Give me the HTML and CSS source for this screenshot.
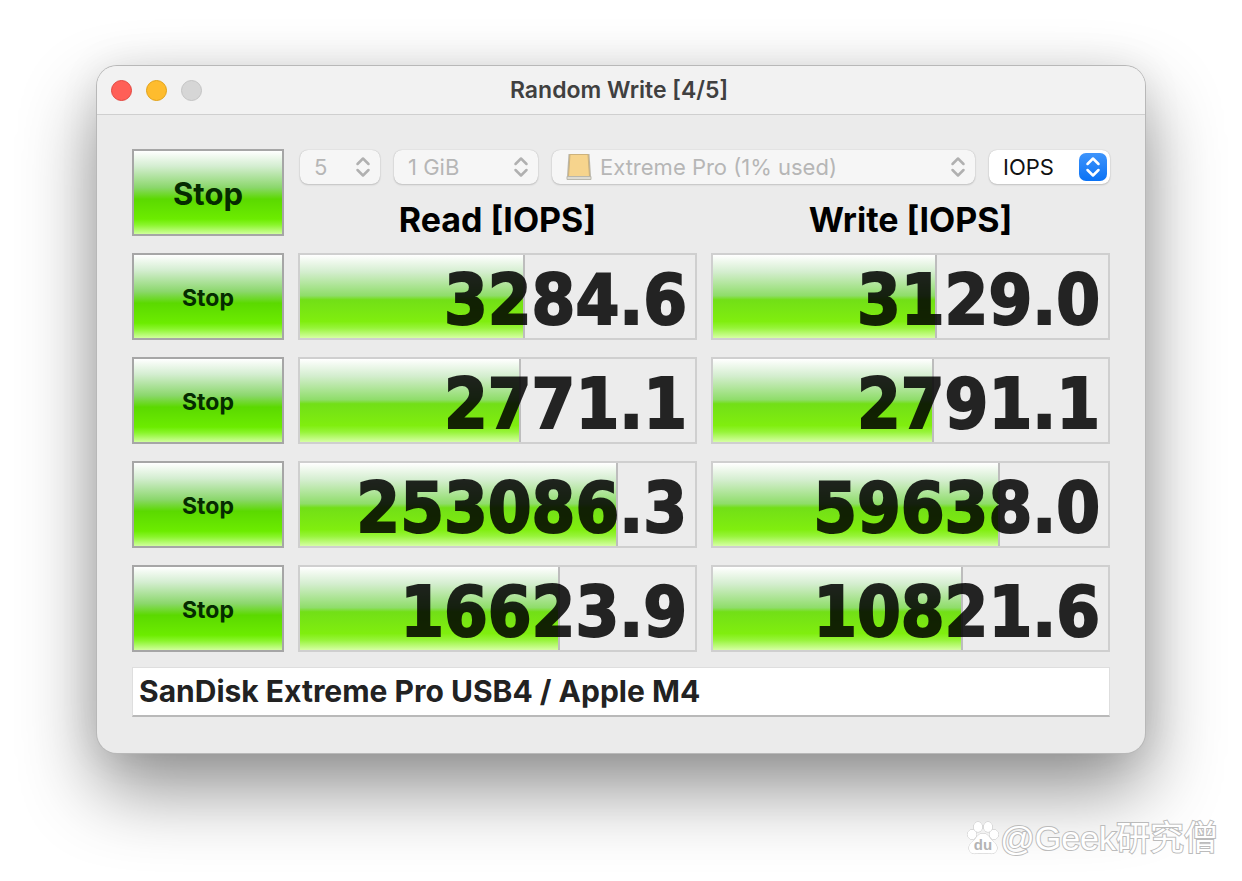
FILE: index.html
```html
<!DOCTYPE html>
<html lang="en">
<head>
    <meta charset="UTF-8">
    <meta name="viewport" content="width=device-width, initial-scale=1.0">
    <title>Random Write [4/5]</title>
    <link rel="stylesheet" href="styles.css">
</head>
<body>
    <main class="window">
        <header class="titlebar">
            <div class="lights">
                <button type="button" class="light close" aria-label="Close"></button>
                <button type="button" class="light minimize" aria-label="Minimize"></button>
                <button type="button" class="light zoom" aria-label="Zoom" disabled></button>
            </div>
            <h1>Random Write [4/5]</h1>
        </header>

        <form class="content">
            <div class="bench">
                <button type="button" class="stop stop-all">Stop</button>
                <div class="top">
                    <div class="options">
                        <div class="picker count">
                            <select aria-label="Test count" disabled><option>5</option></select>
                            <svg class="arrows" viewBox="0 0 28 28"><path d="M8.500 11 14 5.500 19.500 11M8.500 17 14 22.500 19.500 17"/></svg>
                        </div>
                        <div class="picker size">
                            <select aria-label="Test size" disabled><option>1 GiB</option></select>
                            <svg class="arrows" viewBox="0 0 28 28"><path d="M8.500 11 14 5.500 19.500 11M8.500 17 14 22.500 19.500 17"/></svg>
                        </div>
                        <div class="picker drive">
                            <svg class="disk" viewBox="0 0 26 28">
                                <path d="M2.500 1h21L25 23.500v3H1v-3z" fill="#b9b5a8"/>
                                <path d="M4 1.500h18l1.500 22h-21z" fill="#f6d48d" stroke="#cdb27c"/>
                                <path d="M1 23.500h24v3H1z" fill="#dddbd2" stroke="#b9b7ac"/>
                            </svg>
                            <select aria-label="Target drive" disabled><option>Extreme Pro (1% used)</option></select>
                            <svg class="arrows" viewBox="0 0 28 28"><path d="M8.500 11 14 5.500 19.500 11M8.500 17 14 22.500 19.500 17"/></svg>
                        </div>
                        <div class="picker unit">
                            <select aria-label="Unit"><option>IOPS</option><option>MB/s</option></select>
                            <svg class="arrows" viewBox="0 0 28 28"><path d="M8.500 11 14 5.500 19.500 11M8.500 17 14 22.500 19.500 17"/></svg>
                        </div>
                    </div>
                    <div class="heads">
                        <h2>Read [IOPS]</h2>
                        <h2>Write [IOPS]</h2>
                    </div>
                </div>

                <button type="button" class="stop">Stop</button>
                <div class="meter"><div class="fill" style="width: 57%"></div><output>3284.6</output></div>
                <div class="meter"><div class="fill" style="width: 56.6%"></div><output>3129.0</output></div>

                <button type="button" class="stop">Stop</button>
                <div class="meter"><div class="fill" style="width: 56%"></div><output>2771.1</output></div>
                <div class="meter"><div class="fill" style="width: 56%"></div><output>2791.1</output></div>

                <button type="button" class="stop">Stop</button>
                <div class="meter"><div class="fill" style="width: 80.4%"></div><output>253086.3</output></div>
                <div class="meter"><div class="fill" style="width: 72.6%"></div><output>59638.0</output></div>

                <button type="button" class="stop">Stop</button>
                <div class="meter"><div class="fill" style="width: 65.7%"></div><output>16623.9</output></div>
                <div class="meter"><div class="fill" style="width: 63.4%"></div><output>10821.6</output></div>
            </div>
            <input class="comment" type="text" aria-label="Comment" value="SanDisk Extreme Pro USB4 / Apple M4">
        </form>
    </main>

    <div class="watermark">
        <svg class="paw" viewBox="0 0 32 34">
            <g fill="#fff" stroke="#c4c4c4">
                <ellipse cx="11" cy="6" rx="4.300" ry="5"/>
                <ellipse cx="21" cy="6" rx="4.300" ry="5"/>
                <ellipse cx="5" cy="13.500" rx="4.500" ry="4.800"/>
                <ellipse cx="27" cy="13.500" rx="4.500" ry="4.800"/>
                <path d="M16 12.500c4 0 6 3 8 6 3 3 6 5 6 8.500 0 4-3 6-7 5.500-3-.5-11-.5-14 0-4 .5-7-1.500-7-5.500 0-3.500 3-5.500 6-8.500 2-3 4-6 8-6z"/>
            </g>
            <text x="16" y="29" text-anchor="middle">du</text>
        </svg>
        <span>@Geek研究僧</span>
    </div>
</body>
</html>
```
FILE: styles.css
```css
* {
    box-sizing: border-box;
}
body {
    margin: 0;
    padding: 66px 97px;
    min-height: 100vh;
    position: relative;
    background: #fff;
    font-family: Inter, "Liberation Sans", sans-serif;
    color: #222;
}
.window {
    border-radius: 20px;
    overflow: hidden;
    background: #ebebeb;
    box-shadow: 0 0 0 1px #b8b8b8, 0 36px 76px rgba(0, 0, 0, 0.44), 0 0 40px rgba(0, 0, 0, 0.08);
}

/* Title bar */
.titlebar {
    display: grid;
    grid-template-columns: 1fr auto 1fr;
    align-items: center;
    height: 49px;
    padding: 0 14px;
    background: #f2f2f2;
    border-bottom: 1px solid #cfcfcf;
}
.titlebar h1 {
    margin: 0;
    padding-right: 4px;
    font-size: 23px;
    line-height: 26px;
    font-weight: 600;
    color: #404040;
}
.lights {
    display: flex;
    gap: 14px;
}
.light {
    width: 21px;
    height: 21px;
    padding: 0;
    border: 1px solid #c3c3c3;
    border-radius: 50%;
    background: #d6d6d6;
}
.close {
    background: #ff5f57;
    border-color: #e2463f;
}
.minimize {
    background: #febc2e;
    border-color: #e1a116;
}

/* Benchmark grid */
.content {
    display: flex;
    flex-direction: column;
    gap: 15px;
    padding: 34px 35px 36px;
}
.bench {
    display: grid;
    grid-template-columns: 152px 1fr 1fr;
    grid-auto-rows: 87px;
    gap: 17px 14px;
}
.top {
    grid-column: 2 / 4;
}
.stop {
    border: 2px solid #a6a6a6;
    padding: 2px 0 0;
    font: 700 23px Inter, sans-serif;
    color: #052b00;
    background: linear-gradient(#fff 0%, #d5eed2 18%, #8bd76c 44%, #5bd900 58%, #6cec00 82%, #8af52c 89%, #d0ff9c 100%);
}
.stop-all {
    font-size: 31px;
}

/* Pop-up menus */
.options {
    display: flex;
    gap: 14px;
    padding: 1px 0 0 2px;
    height: 35px;
}
.picker {
    position: relative;
    border-radius: 8px;
    background: #f6f6f6;
    box-shadow: 0 0 1px rgba(0, 0, 0, 0.25), 0 1px 2px rgba(0, 0, 0, 0.16);
}
.picker select {
    display: block;
    width: 100%;
    height: 100%;
    padding: 0 36px 1px 14px;
    border: none;
    border-radius: 8px;
    appearance: none;
    background: transparent;
    font: 22px Inter, sans-serif;
    color: #111;
}
.picker select:disabled {
    color: #b6b6b6;
    opacity: 1;
}
.count {
    width: 80px;
}
.size {
    width: 144px;
}
.drive {
    flex: 1;
}
.drive select {
    padding-left: 48px;
}
.unit {
    width: 121px;
    background: #fff;
}
.arrows {
    position: absolute;
    top: 3px;
    right: 3px;
    width: 28px;
    height: 28px;
    border-radius: 7px;
    pointer-events: none;
    fill: none;
    stroke: #b0b0b0;
    stroke-width: 2.5;
    stroke-linecap: round;
    stroke-linejoin: round;
}
.unit .arrows {
    background: linear-gradient(#3e94fb, #0a72f5);
    stroke: #fff;
}
.disk {
    position: absolute;
    top: 3px;
    left: 14px;
    width: 26px;
    height: 28px;
    pointer-events: none;
}
.heads {
    display: grid;
    grid-template-columns: 1fr 1fr;
    gap: 14px;
    padding-top: 16px;
}
.heads h2 {
    margin: 0;
    font-size: 34px;
    line-height: 40px;
    font-weight: 700;
    text-align: center;
    color: #000;
}

/* Result meters */
.meter {
    display: grid;
    align-items: center;
    border: 2px solid #cfcfcf;
    background: #ececec;
}
.fill,
.meter output {
    grid-area: 1 / 1;
}
.fill {
    height: 100%;
    border-right: 2px solid #bdbdbd;
    background: linear-gradient(#fff 0%, #d5eed0 20%, #8fdd6a 49%, #72df17 54%, #80ee0e 80%, #97f43a 88%, #d6ffa4 100%);
}
.meter output {
    padding: 6px 8px 0 0;
    text-align: right;
    font: 700 70px/74px "DejaVu Sans Condensed", "DejaVu Sans", sans-serif;
    color: #000;
    -webkit-text-stroke: 2px #000;
    opacity: 0.85;
}

.comment {
    width: 100%;
    height: 50px;
    padding: 0 6px 2px;
    border: 1px solid #dedede;
    border-bottom: 2px solid #b9b9b9;
    background: #fff;
    font: 700 30px Inter, sans-serif;
    color: #222;
}

/* Watermark */
.watermark {
    position: absolute;
    right: 24px;
    bottom: 22px;
    display: flex;
    align-items: center;
    gap: 1px;
    font: 34px/42px "Liberation Sans", "Noto Sans CJK SC", sans-serif;
    color: #fff;
    -webkit-text-stroke: 2px #bbb;
    paint-order: stroke fill;
}
.paw {
    width: 32px;
    height: 34px;
}
.paw text {
    font: 700 15px "Liberation Sans", sans-serif;
    fill: #b4b4b4;
    -webkit-text-stroke: 0;
}
```
